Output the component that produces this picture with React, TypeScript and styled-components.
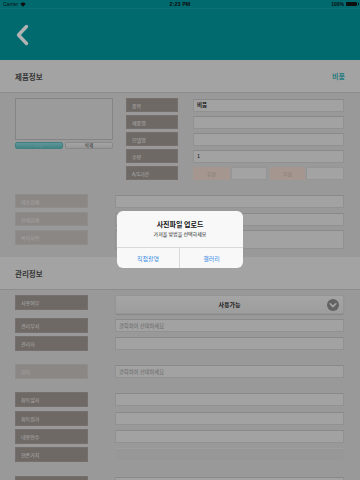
import React from "react";
import styled, { createGlobalStyle } from "styled-components";

const GlobalStyle = createGlobalStyle`
  html, body { margin: 0; padding: 0; }
  body {
    width: 360px;
    height: 480px;
    overflow: hidden;
    font-family: "Noto Sans CJK KR", "Noto Sans", sans-serif;
  }
  * { box-sizing: border-box; }
`;

const Screen = styled.div`
  position: relative;
  width: 360px;
  height: 480px;
  overflow: hidden;
  background: #dbdbdb;
`;

const NavBar = styled.header`
  height: 60px;
  background: #0099a0;
  display: flex;
  flex-direction: column;
`;

const StatusBar = styled.div`
  height: 9px;
  display: grid;
  grid-template-columns: 1fr auto 1fr;
  align-items: center;
  padding: 0 3px;
  font-family: "Liberation Sans", Arial, sans-serif;
  font-size: 5px;
  color: #151515;
  border-bottom: 1px solid rgba(255, 255, 255, 0.08);
`;

const StatusLeft = styled.div`
  display: flex;
  align-items: center;
  gap: 2px;
`;

const StatusTime = styled.div`
  font-weight: 700;
  font-size: 5.5px;
`;

const StatusRight = styled.div`
  display: flex;
  justify-content: flex-end;
  align-items: center;
  gap: 2px;
  font-weight: 700;
`;

const Battery = styled.div`
  width: 11px;
  height: 4px;
  background: #151515;
  border-radius: 1px;
  position: relative;
  &::after {
    content: "";
    position: absolute;
    right: -1.5px;
    top: 1px;
    width: 1px;
    height: 2px;
    background: #151515;
  }
`;

const NavContent = styled.div`
  flex: 1;
  display: flex;
  align-items: center;
  padding-left: 15px;
`;

const SectionBand = styled.div`
  height: 33px;
  background: #eaeaea;
  border-bottom: 1px solid #c9c9c9;
  display: flex;
  align-items: center;
  justify-content: space-between;
  padding: 0 15px;
`;

const BandTitle = styled.div`
  font-size: 7.5px;
  font-weight: 700;
  color: #4f4f4f;
`;

const BandTag = styled.div`
  font-size: 7px;
  font-weight: 700;
  color: #3cb4b9;
`;

const ProductArea = styled.div`
  display: flex;
  padding: 5px 16px 0 15px;
  gap: 13px;
`;

const PhotoColumn = styled.div`
  width: 98px;
  display: flex;
  flex-direction: column;
  gap: 2px;
`;

const PhotoBox = styled.div`
  height: 42px;
  background: #dfdfdf;
  border: 1px solid #bdbdbd;
`;

const PhotoButtons = styled.div`
  display: grid;
  grid-template-columns: 1fr 1fr;
  gap: 2px;
`;

const PhotoButton = styled.div<{ $primary?: boolean }>`
  height: 7px;
  border-radius: 2px;
  display: flex;
  align-items: center;
  justify-content: center;
  font-size: 4.5px;
  line-height: 1;
  color: ${(p) => (p.$primary ? "#8fd6d8" : "#3a3a3a")};
  background: ${(p) =>
    p.$primary
      ? "linear-gradient(#8ad8da, #5ebdc0)"
      : "linear-gradient(#ececec, #d8d8d8)"};
  border: 1px solid ${(p) => (p.$primary ? "#5eb6b8" : "#c4c4c4")};
`;

const FieldGrid = styled.div`
  flex: 1;
  display: grid;
  grid-template-columns: 52px 1fr;
  column-gap: 15px;
  row-gap: 3px;
`;

const Label = styled.div<{ $light?: boolean; $h?: number }>`
  height: ${(p) => p.$h ?? 14}px;
  background: ${(p) => (p.$light ? "#c6c2be" : "#9f9792")};
  color: ${(p) => (p.$light ? "#ebe9e6" : "#f2f0ee")};
  font-size: 5px;
  display: flex;
  align-items: center;
  padding-left: 5px;
  border: 1px solid ${(p) => (p.$light ? "#cdc9c5" : "#a8a19c")};
`;

const Input = styled.div<{ $disabled?: boolean; $h?: number; $bold?: boolean; $placeholder?: boolean }>`
  height: ${(p) => p.$h ?? 13}px;
  align-self: center;
  background: ${(p) => (p.$disabled ? "#d8d8d8" : "#e8e8e8")};
  border: 1px solid ${(p) => (p.$disabled ? "#dcdcdc" : "#d0d0d0")};
  border-top-color: ${(p) => (p.$disabled ? "#e2e2e2" : "#c4c4c4")};
  display: flex;
  align-items: center;
  padding-left: 3px;
  font-size: ${(p) => (p.$placeholder ? 5.3 : 5.5)}px;
  font-weight: ${(p) => (p.$bold ? 700 : 400)};
  color: ${(p) => (p.$placeholder ? "#9a9a9a" : "#2a2a2a")};
`;

const AsRow = styled.div`
  display: grid;
  grid-template-columns: 37px 36px 37px 1fr;
  column-gap: 1px;
  height: 13px;
  align-self: center;
`;

const AsTag = styled.div<{ $gapLeft?: boolean }>`
  background: #ecd9cf;
  color: #bfaea6;
  font-size: 5px;
  display: flex;
  align-items: center;
  justify-content: center;
  margin-left: ${(p) => (p.$gapLeft ? 2 : 0)}px;
`;

const AsInput = styled.div`
  background: #eaeaea;
  border: 1px solid #d6d6d6;
`;

const FormRows = styled.div<{ $top: number; $bottom?: number }>`
  display: flex;
  flex-direction: column;
  padding: 0 16px 0 15px;
  margin-top: ${(p) => p.$top}px;
  margin-bottom: ${(p) => p.$bottom ?? 0}px;
`;

const FormRow = styled.div<{ $gap?: number }>`
  display: grid;
  grid-template-columns: 73px 1fr;
  column-gap: 27px;
  align-items: start;
  margin-top: ${(p) => p.$gap ?? 0}px;
`;

const Dropdown = styled.div`
  height: 19px;
  border-radius: 2px;
  background: linear-gradient(#ececec, #e2e2e2);
  box-shadow: 0 1px 1px rgba(0, 0, 0, 0.12);
  border: 1px solid #d6d6d6;
  position: relative;
  display: flex;
  align-items: center;
  justify-content: center;
  font-size: 6px;
  font-weight: 700;
  color: #2b2b2b;
`;

const DropIcon = styled.svg`
  position: absolute;
  right: 4px;
  top: 3px;
`;

const Overlay = styled.div`
  position: absolute;
  inset: 0;
  background: rgba(0, 0, 0, 0.3);
  display: flex;
  align-items: center;
  justify-content: center;
`;

const Dialog = styled.div`
  width: 126px;
  height: 57px;
  margin-top: -1px;
  background: rgba(250, 250, 250, 0.98);
  border-radius: 6px;
  display: flex;
  flex-direction: column;
  overflow: hidden;
`;

const DialogBody = styled.div`
  height: 37px;
  display: flex;
  flex-direction: column;
  align-items: center;
  padding-top: 9px;
  border-bottom: 1px solid #d9d9d9;
`;

const DialogTitle = styled.div`
  font-size: 7px;
  line-height: 9px;
  font-weight: 700;
  color: #111;
`;

const DialogMessage = styled.div`
  font-size: 5px;
  line-height: 7px;
  margin-top: 1px;
  color: #222;
`;

const DialogActions = styled.div`
  flex: 1;
  display: grid;
  grid-template-columns: 1fr 1fr;
`;

const DialogAction = styled.div<{ $divider?: boolean }>`
  display: flex;
  align-items: center;
  justify-content: center;
  font-size: 6px;
  color: #3a8ee6;
  border-right: ${(p) => (p.$divider ? "1px solid #d9d9d9" : "none")};
`;

const productFields: { label: string; value?: string; bold?: boolean }[] = [
  { label: "품목", value: "비품", bold: true },
  { label: "제품명" },
  { label: "모델명" },
  { label: "수량", value: "1" },
];

export default function App() {
  return (
    <>
      <GlobalStyle />
      <Screen>
        <NavBar>
          <StatusBar>
            <StatusLeft>
              <span>Carrier</span>
              <svg width="6" height="5" viewBox="0 0 12 10">
                <path d="M6 9.5 L0.5 3.5 A8 8 0 0 1 11.5 3.5 Z" fill="#151515" />
              </svg>
            </StatusLeft>
            <StatusTime>2:23 PM</StatusTime>
            <StatusRight>
              <span>100%</span>
              <Battery />
            </StatusRight>
          </StatusBar>
          <NavContent>
            <svg width="14" height="22" viewBox="0 0 14 22">
              <polyline
                points="11.5,2.5 3.5,11 11.5,19.5"
                fill="none"
                stroke="#ffffff"
                strokeWidth="3.4"
                strokeLinecap="round"
                strokeLinejoin="round"
              />
            </svg>
          </NavContent>
        </NavBar>

        <SectionBand>
          <BandTitle>제품정보</BandTitle>
          <BandTag>비품</BandTag>
        </SectionBand>

        <ProductArea>
          <PhotoColumn>
            <PhotoBox />
            <PhotoButtons>
              <PhotoButton $primary>수정</PhotoButton>
              <PhotoButton>삭제</PhotoButton>
            </PhotoButtons>
          </PhotoColumn>
          <FieldGrid>
            {productFields.map((f) => (
              <React.Fragment key={f.label}>
                <Label>{f.label}</Label>
                <Input $bold={f.bold}>{f.value}</Input>
              </React.Fragment>
            ))}
            <Label>A/S기간</Label>
            <AsRow>
              <AsTag>유상</AsTag>
              <AsInput />
              <AsTag $gapLeft>무상</AsTag>
              <AsInput />
            </AsRow>
          </FieldGrid>
        </ProductArea>

        <FormRows $top={14} $bottom={8}>
          <FormRow>
            <Label $light>제조업체</Label>
            <Input />
          </FormRow>
          <FormRow $gap={4}>
            <Label $light>판매업체</Label>
            <Input />
          </FormRow>
          <FormRow $gap={4}>
            <Label $light $h={15}>특이사항</Label>
            <Input $h={19} />
          </FormRow>
        </FormRows>

        <SectionBand>
          <BandTitle>관리정보</BandTitle>
        </SectionBand>

        <FormRows $top={5}>
          <FormRow>
            <Label $h={15}>사용여부</Label>
            <Dropdown>
              사용가능
              <DropIcon width="12" height="12" viewBox="0 0 12 12">
                <circle cx="6" cy="6" r="6" fill="#8e8e8e" />
                <polyline
                  points="3.2,4.8 6,7.6 8.8,4.8"
                  fill="none"
                  stroke="#ededed"
                  strokeWidth="1.6"
                  strokeLinecap="round"
                  strokeLinejoin="round"
                />
              </DropIcon>
            </Dropdown>
          </FormRow>
          <FormRow $gap={4}>
            <Label $h={15}>관리부서</Label>
            <Input $placeholder>클릭하여 선택하세요</Input>
          </FormRow>
          <FormRow $gap={3}>
            <Label $h={15}>관리자</Label>
            <Input />
          </FormRow>
          <FormRow $gap={13}>
            <Label $light $h={15}>위치</Label>
            <Input $placeholder>클릭하여 선택하세요</Input>
          </FormRow>
          <FormRow $gap={13}>
            <Label $h={15}>취득일자</Label>
            <Input />
          </FormRow>
          <FormRow $gap={4}>
            <Label $h={15}>취득원가</Label>
            <Input />
          </FormRow>
          <FormRow $gap={3}>
            <Label $h={15}>내용연수</Label>
            <Input />
          </FormRow>
          <FormRow $gap={3}>
            <Label $h={15}>현존가치</Label>
            <Input $disabled />
          </FormRow>
          <FormRow $gap={14}>
            <Label $h={15} />
            <Input />
          </FormRow>
        </FormRows>

        <Overlay>
          <Dialog>
            <DialogBody>
              <DialogTitle>사진파일 업로드</DialogTitle>
              <DialogMessage>가져올 방법을 선택하세요</DialogMessage>
            </DialogBody>
            <DialogActions>
              <DialogAction $divider>직접촬영</DialogAction>
              <DialogAction>갤러리</DialogAction>
            </DialogActions>
          </Dialog>
        </Overlay>
      </Screen>
    </>
  );
}
